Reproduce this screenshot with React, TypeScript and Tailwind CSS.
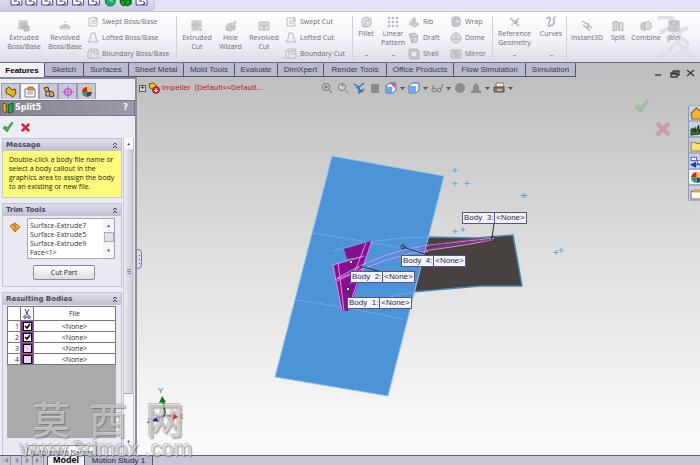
import React from "react";

const UI = "font-['Open_Sans','Noto_Sans',sans-serif]";
const ARIAL = "font-['Liberation_Sans',Arial,sans-serif]";

type IconName =
  | "extrude" | "revolve" | "sweep" | "loft" | "boundary" | "cut" | "hole" | "revcut"
  | "fillet" | "pattern" | "rib" | "draft" | "shell" | "wrap" | "dome" | "mirror"
  | "refgeo" | "curves" | "instant" | "split" | "combine" | "join";

const shapes: Record<IconName, React.ReactNode> = {
  extrude: (<><path d="M1 1h8v8H1z" fill="#e0e0e6" /><path d="M3 3h5v5H3zM6 6h5v5H6z" fill="#c2c2ca" /></>),
  revolve: (<><path d="M6 1v10" strokeDasharray="2 1" /><path d="M1 8c0-3 3-3 5-3s5 0 5 3l-2 1-3-2-3 2z" fill="#cfcfd6" /></>),
  sweep: (<><path d="M2 2h5M2 2v8h8V8M4 5h4l2-3M4 7h6V3" /><path d="M7 1l3 1-1 3" fill="#d0d0d6" /></>),
  loft: (<path d="M4 1h4l1 6 2 3H1l2-3z" fill="#eeeef4" />),
  boundary: (<><path d="M1 3h10v7H1z" fill="#e8e8ee" /><path d="M1 3l2-2h7l1 2M4 3v7M7 3v3h4" /></>),
  cut: (<><path d="M1 1h9v9H1z" fill="#e2e2e8" /><path d="M3 3h5v5H3zM1 5h9M5 1v9M9 9l2 2" /></>),
  hole: (<><path d="M1 6l4-3 5 2v4l-4 2-5-1z" fill="#c8c8ce" /><path d="M6 6l4-5 1 2-4 4z" fill="#e9e9ee" /></>),
  revcut: (<><path d="M1 2h10v8H1z" fill="#dedee4" /><path d="M3 4c1 4 5 4 6 0M6 2v8" /></>),
  fillet: (<><path d="M2 10V5c0-3 2-4 5-4l4 2v6l-3 2H4z" fill="#dedee4" /><path d="M5 11V7c0-2 2-3 5-3" /></>),
  pattern: (<g fill="#c3c3cb"><path d="M1 1h2v2H1zM5 1h2v2H5zM9 1h2v2H9zM1 5h2v2H1zM5 5h2v2H5zM9 5h2v2H9zM1 9h2v2H1zM5 9h2v2H5zM9 9h2v2H9z" strokeWidth=".4" /></g>),
  rib: (<><path d="M1 8l4-2V2h2v4l4 2-4 3z" fill="#c9c9d0" /><path d="M1 6l4-2" /></>),
  draft: (<><path d="M1 2l6-1 3 3-1 6-5 1z" fill="#cfcfd6" /><path d="M1 2l4 3 5-1M5 5L4 11" /></>),
  shell: (<><path d="M1 1h8l2 2v8H3l-2-2z" fill="#c6c6cd" /><path d="M3 3h6v6H3z" fill="#e6e6ec" /></>),
  wrap: (<><path d="M2 2c3-2 6-1 8 0v7c-3 2-6 2-8 0z" fill="#c9c9d0" /><path d="M5 4h5v3H5z" fill="#ececf1" /></>),
  dome: (<><circle cx="6" cy="6" r="5" fill="#dcdce2" /><path d="M1 6c3 2 7 2 10 0M6 1v6" /></>),
  mirror: (<><path d="M1 2h4v8H1zM7 2h4v8H7z" fill="#cfcfd6" /><path d="M6 1v10M3 4l6 4" /></>),
  refgeo: (<><path d="M1 2l9 8M10 2L4 8" strokeWidth="1.5" /><circle cx="7" cy="6" r="1.5" fill="#c0c0c8" /><path d="M2 9h2" /></>),
  curves: (<path d="M1 3c3-3 5-2 4 1S2 11 5 10s5-3 4-5 0-4 2-4" strokeWidth="1.6" />),
  instant: (<><path d="M1 1l5 3 5 4M2 5l3 2 4 4M7 3v3M4 7h4" strokeWidth="1.3" /></>),
  split: (<><path d="M1 2l4-1v9l-4 1z" fill="#d3d3da" /><path d="M7 2l4 1v8l-4-1zM5 1l2 3v7" fill="#e2e2e8" /></>),
  combine: (<><path d="M1 4l3-2 3 2v5L4 11 1 9z" fill="#cbcbd2" /><path d="M5 3l3-2 3 2v5L8 10 5 8z" fill="#dcdce2" /></>),
  join: (<><path d="M1 1h10v10H1z" fill="#cfcfd6" /><path d="M3 1v4h6V1M3 8h6" /></>),
};

function RibbonIcon({ name }: { name: IconName }) {
  return (
    <svg viewBox="0 0 12 12" className="size-3 shrink-0" fill="none" stroke="#b3b3bc" strokeWidth="0.9" aria-hidden="true">
      {shapes[name]}
    </svg>
  );
}

function BigTool({ icon, lines, w, drop, pt = "pt-2" }: { icon: IconName; lines: string[]; w: string; drop?: boolean; pt?: string }) {
  return (
    <button type="button" className={`relative flex shrink-0 flex-col items-center ${pt} ${w}`}>
      <RibbonIcon name={icon} />
      <span className="mt-px flex flex-col items-center leading-[9px] whitespace-nowrap">
        {lines.map((l) => <span key={l}>{l}</span>)}
      </span>
      {drop && <span className="absolute bottom-1.5 h-px w-[3px] bg-[#9a9aa4]" />}
    </button>
  );
}

function ToolList({ items, w }: { items: [IconName, string][]; w: string }) {
  return (
    <div className={`flex shrink-0 flex-col pt-0.5 pl-px ${w}`}>
      {items.map(([icon, label]) => (
        <button key={label} type="button" className="flex h-4 items-center gap-[3px] whitespace-nowrap">
          <RibbonIcon name={icon} />
          {label}
        </button>
      ))}
    </div>
  );
}

const Sep = () => <span className="my-1 w-px shrink-0 bg-[#d0d0da]" />;

const tabs: [string, string][] = [
  ["Features", "w-[45px]"], ["Sketch", "w-[39px]"], ["Surfaces", "w-[45px]"], ["Sheet Metal", "w-[55px]"],
  ["Mold Tools", "w-[51px]"], ["Evaluate", "w-[43px]"], ["DimXpert", "w-[46px]"], ["Render Tools", "w-[63px]"],
  ["Office Products", "w-[67px]"], ["Flow Simulation", "w-[72px]"], ["Simulation", "w-[50px]"],
];

function QuickBar() {
  return (
    <div className="h-3 shrink-0 border-b border-[#c4c4d2] bg-[#e4e4f6]">
      <div className="h-[11px] w-[155px] rounded-br-sm border-r border-[#c8c8dc] bg-linear-to-b from-[#dcdcf0] to-[#c9c9de] pl-[10px]">
        <svg viewBox="10 0 145 8" className="h-2 w-[144px]" aria-hidden="true">
          {[17, 32, 48, 63, 79, 95, 143].map((x) => (
            <g key={x}>
              <path d={`M${x - 6} 0v5h11v-5`} fill="#f7f7ff" stroke="#4545a0" />
              <path d={`M${x} 5l3-2-2-2M${x - 3} 1h3`} stroke="#22222c" fill="none" />
            </g>
          ))}
          <circle cx="111" cy="1" r="5" fill="#18b06a" stroke="#0b6b3a" />
          <path d="M110 0l4 2" stroke="#8df0c0" />
          <path d="M121 0h11v4l-4 2-2-1-2 1-3-3z" fill="#10a020" stroke="#0a5010" />
          <path d="M126 0v5" stroke="#052" />
        </svg>
      </div>
    </div>
  );
}

function Ribbon() {
  return (
    <div className={`relative flex h-[50px] shrink-0 overflow-hidden bg-linear-to-b from-white via-[#f4f4fa] to-[#dddde9] pl-1 text-[7px] text-[#6c6c76] ${UI}`}>
      <svg viewBox="0 0 50 46" className="absolute top-1 right-0 h-[46px] w-[50px]" fill="none" stroke="#dedee9" strokeWidth="4" aria-hidden="true">
        <path d="M8 2c14-3 20 3 14 8L10 17M22 10c6 5 2 10-6 13M4 45c12-6 20-14 20-18M26 24l16 18M38 12c-10 2-12 8-4 12s2 12-12 15" />
      </svg>
      <BigTool icon="extrude" lines={["Extruded", "Boss/Base"]} w="w-10" />
      <BigTool icon="revolve" lines={["Revolved", "Boss/Base"]} w="w-[42px]" />
      <ToolList w="w-[90px]" items={[["sweep", "Swept Boss/Base"], ["loft", "Lofted Boss/Base"], ["boundary", "Boundary Boss/Base"]]} />
      <Sep />
      <BigTool icon="cut" lines={["Extruded", "Cut"]} w="w-10" />
      <BigTool icon="hole" lines={["Hole", "Wizard"]} w="w-[27px]" />
      <BigTool icon="revcut" lines={["Revolved", "Cut"]} w="w-10" />
      <ToolList w="w-[68px]" items={[["sweep", "Swept Cut"], ["loft", "Lofted Cut"], ["boundary", "Boundary Cut"]]} />
      <Sep />
      <BigTool icon="fillet" lines={["Fillet"]} w="w-[26px]" drop pt="pt-1" />
      <BigTool icon="pattern" lines={["Linear", "Pattern"]} w="w-[28px]" drop pt="pt-1" />
      <ToolList w="w-[42px]" items={[["rib", "Rib"], ["draft", "Draft"], ["shell", "Shell"]]} />
      <ToolList w="w-[43px]" items={[["wrap", "Wrap"], ["dome", "Dome"], ["mirror", "Mirror"]]} />
      <Sep />
      <BigTool icon="refgeo" lines={["Reference", "Geometry"]} w="w-[43px]" drop pt="pt-1" />
      <BigTool icon="curves" lines={["Curves"]} w="w-[30px]" drop pt="pt-1" />
      <Sep />
      <BigTool icon="instant" lines={["Instant3D"]} w="w-10" />
      <BigTool icon="split" lines={["Split"]} w="w-[22px]" />
      <BigTool icon="combine" lines={["Combine"]} w="w-[34px]" />
      <BigTool icon="join" lines={["Join"]} w="w-[22px]" />
    </div>
  );
}

function CommandTabs() {
  return (
    <div className={`flex h-[15px] shrink-0 border-t border-[#6a6a84] bg-[#bfbfc1] text-[8px] ${ARIAL}`} role="tablist">
      {tabs.map(([t, w], i) => (
        <button
          key={t}
          type="button"
          role="tab"
          aria-selected={i === 0}
          className={`shrink-0 border-r border-[#55556c] text-center leading-[13px] whitespace-nowrap ${w} ${
            i === 0 ? "bg-[#f0f0f8] font-bold text-black" : "border-b bg-[#b9b9cf] text-[#3a3a4a]"
          }`}
        >
          {t}
        </button>
      ))}
    </div>
  );
}

function Check({ className }: { className: string }) {
  return (
    <svg viewBox="0 0 12 12" className={className} aria-hidden="true">
      <path d="M1 7l2-2 2 2 5-6 1 1-6 9z" fill="#43b043" stroke="#2a7c30" strokeWidth=".6" />
    </svg>
  );
}
function Cross({ className }: { className: string }) {
  return (
    <svg viewBox="0 0 12 12" className={className} aria-hidden="true">
      <path d="M2 2l8 8M10 2l-8 8" stroke="#cf2436" strokeWidth="2.8" />
    </svg>
  );
}

const wheel = (
  <>
    <path d="M6 6V1a5 5 0 0 1 5 5z" fill="#f2c21c" />
    <path d="M6 6V1a5 5 0 0 0-5 5z" fill="#d8232b" />
    <path d="M6 6h5a5 5 0 0 1-5 5z" fill="#3d3d9c" />
    <path d="M6 6H1a5 5 0 0 0 5 5z" fill="#2fa045" />
  </>
);

const managerTabs: [string, React.ReactNode][] = [
  ["Feature tree", <path key="a" d="M1 3l3-2 3 3 3-1 1 4-3 4-3-2-4-2z" fill="#e8b520" stroke="#5c4708" />],
  ["Property manager", <g key="b"><path d="M1 3h10v8H1z" fill="#fff" stroke="#777" /><path d="M4 1h5l1 3H4z" fill="#e29a30" stroke="#7a4d10" strokeWidth=".6" /><path d="M3 6h6M3 8h6" stroke="#888" /></g>],
  ["Configurations", <g key="c"><path d="M1 2l4-1 1 4-3 1zM6 5l4 1 1 4-4 1z" fill="#e3b52b" stroke="#433" /><path d="M3 6v4h3" stroke="#333" fill="none" /></g>],
  ["Dimensions", <g key="d" fill="none" stroke="#c553c5"><circle cx="6" cy="6" r="3.4" strokeWidth="1.4" /><path d="M6 0v12M0 6h12" /></g>],
  ["Appearances", <g key="e">{wheel}</g>],
];

function Section({ title, children, body }: { title: string; children: React.ReactNode; body: string }) {
  return (
    <section className="border border-[#c3c3d4] bg-[#e9e9f3]">
      <h2 className="flex h-3 items-center justify-between bg-linear-to-b from-[#dfdfeb] to-[#bfbfd2] px-[3px] font-['DejaVu_Sans',sans-serif] text-[7px] leading-3 font-bold text-[#4a4a58]">
        {title}
        <button type="button" aria-label={`Collapse ${title}`}>
          <svg viewBox="0 0 6 7" className="h-[7px] w-1.5" fill="none" stroke="#3c3c50"><path d="M1 3l2-2 2 2M1 6l2-2 2 2" /></svg>
        </button>
      </h2>
      <div className={body}>{children}</div>
    </section>
  );
}

function PropertyPanel() {
  return (
    <aside className={`flex w-[137px] shrink-0 flex-col overflow-hidden border-t-2 border-r-2 border-t-[#8a8a9c] border-r-[#8e8e9a] bg-[#ececf5] text-[7px] ${UI}`}>
      <div className="mt-1 flex h-4 shrink-0 pl-px">
        {managerTabs.map(([n, icon], i) => (
          <button key={n} type="button" aria-label={n} className={`flex w-[19px] items-center justify-center border border-b-0 border-[#9c9cb0] ${i === 1 ? "bg-[#f6f6fc]" : "bg-[#c9c9dc]"}`}>
            <svg viewBox="0 0 12 12" className="size-3">{icon}</svg>
          </button>
        ))}
      </div>
      <div className="mt-px flex h-4 shrink-0 items-center gap-px border border-[#77778a] bg-linear-to-r from-[#858594] to-[#9a9aaa] pl-px font-['DejaVu_Sans',sans-serif] text-[8px] font-bold text-white">
        <svg viewBox="0 0 12 12" className="size-3" aria-hidden="true">
          <path d="M1 1l3 1v9l-3-2z" fill="#e2c52a" stroke="#3c3408" strokeWidth=".7" />
          <path d="M6 3l5-2v9l-4 1z" fill="#27a347" stroke="#083a15" strokeWidth=".7" />
          <path d="M4 9l3 2" stroke="#c22" />
        </svg>
        <span className="flex-1">Split5</span>
        <button type="button" aria-label="Help" className="pr-1.5">?</button>
      </div>
      <div className="flex h-[22px] shrink-0 items-center gap-1.5 pl-0.5">
        <button type="button" aria-label="OK"><Check className="size-3" /></button>
        <button type="button" aria-label="Cancel"><Cross className="size-[11px]" /></button>
      </div>
      <div className="flex min-h-0 flex-1">
        <div className="flex min-w-0 flex-1 flex-col gap-[5px] overflow-hidden pl-0.5">
          <Section title="Message" body="h-[46px] bg-[#fdfb7c] px-1.5 pt-1 text-[#26260c]">
            <p className="leading-[9px] whitespace-nowrap">
              Double-click a body file name or<br />select a body callout in the<br />graphics area to assign the body<br />to an existing or new file.
            </p>
          </Section>
          <Section title="Trim Tools" body="px-1.5 pt-0.5 pb-1.5">
            <div className="flex items-start">
              <svg viewBox="0 0 12 12" className="mt-[3px] mr-1.5 size-3 shrink-0" aria-hidden="true"><path d="M1 5l5-3 5 4-5 5z" fill="#f3b34a" stroke="#b86a10" /><path d="M6 2v9M4 3l5 6" stroke="#c6701a" fill="none" /></svg>
              <div className="flex h-[41px] w-[90px] border border-[#a5a5b5] bg-white">
                <ul className="flex-1 pt-0.5 pl-0.5 leading-[9px] text-[#33333f]" aria-label="Trimming surfaces">
                  <li>Surface-Extrude7</li><li>Surface-Extrude5</li><li>Surface-Extrude9</li><li>Face&lt;1&gt;</li>
                </ul>
                <div className="flex w-[11px] flex-col items-center justify-between bg-[#f3f3f8] py-1 text-[4px] leading-[6px] text-[#222]">
                  <span>▲</span><span className="mb-1 h-[10px] w-[10px] border border-[#aaaaba] bg-[#e1e1ea]" /><span>▼</span>
                </div>
              </div>
            </div>
            <button type="button" className="mt-[6px] ml-6 block h-[15px] w-[62px] rounded-xs border border-[#8b8b96] bg-linear-to-b from-white to-[#dcdce2] text-center leading-3 text-[#22222c]">Cut Part</button>
          </Section>
          <Section title="Resulting Bodies" body="h-[152px] px-1 pt-px">
            <div className="h-[132px] w-[109px] bg-[#ababab]">
              <table className="w-full table-fixed border-collapse bg-white text-center text-[#2c2c34]">
                <thead>
                  <tr className="h-[14px]">
                    <th className="w-[13px] border border-[#777] p-0" aria-label="Number" />
                    <th className="w-[13px] border border-[#777] p-0">
                      <svg viewBox="0 0 8 10" className="mx-auto h-[10px] w-2" fill="none" stroke="#3b3b98" aria-label="Cut"><path d="M2 0l3 6M6 0L3 6" /><circle cx="2" cy="8" r="1.3" /><circle cx="6" cy="8" r="1.3" /></svg>
                    </th>
                    <th className="border border-[#777] p-0 leading-[9px] font-normal">File</th>
                  </tr>
                </thead>
                <tbody>
                  {[1, 2, 3, 4].map((n) => (
                    <tr key={n} className="h-[11px]">
                      <td className="border border-[#777] p-0 pr-px text-right leading-[9px]">{n}</td>
                      <td className="border border-[#777] bg-[#8b2a98] p-0">
                        <span className="relative mx-auto block size-[9px]">
                          <input type="checkbox" defaultChecked={n < 3} aria-label={`Body ${n}`} className="peer block size-[9px] appearance-none border border-black bg-[#e8d8ec] checked:bg-white" />
                          <svg viewBox="0 0 9 9" className="pointer-events-none absolute inset-0 hidden size-[9px] peer-checked:block" fill="none" stroke="#000" strokeWidth="1.5"><path d="M2 4l2 2 3-4" /></svg>
                        </span>
                      </td>
                      <td className="border border-[#777] p-0 leading-[9px]">&lt;None&gt;</td>
                    </tr>
                  ))}
                </tbody>
              </table>
            </div>
            <button type="button" className="mt-[7px] ml-5 block h-[14px] w-[70px] rounded-xs border border-[#8b8b96] bg-white text-center leading-[7px] whitespace-nowrap text-[#33333c]">Auto-assign Names</button>
          </Section>
        </div>
        <div className="ml-px flex w-[11px] shrink-0 flex-col items-center border-x border-[#c8c8d4] bg-[#f7f7fb] text-[4px] leading-[11px] text-[#222]">
          <span>▲</span>
          <span className="flex h-[245px] w-full flex-col items-center justify-center gap-px border-b border-[#a5a5b4] bg-linear-to-r from-[#ededf5] to-[#c6c6d4]">
            <i className="h-px w-1 bg-[#888898]" /><i className="h-px w-1 bg-[#888898]" /><i className="h-px w-1 bg-[#888898]" />
          </span>
          <span className="mt-auto mb-2">▼</span>
        </div>
        <span className="w-px" />
      </div>
    </aside>
  );
}

function Callout({ n, pos }: { n: number; pos: string }) {
  return (
    <div className={`absolute flex h-3 border border-[#54548c] bg-[#f4f4ff] text-[8px] leading-[10px] whitespace-pre text-[#2c2c4c] ${ARIAL} ${pos}`}>
      <span className="w-8 border-r border-[#54548c] pl-px">{`Body  ${n}:`}</span>
      <span className="w-[31px] text-center">&lt;None&gt;</span>
    </div>
  );
}

const marks = [[455, 170], [455, 183], [467, 183], [523, 195], [525, 195], [455, 231], [463, 229], [556, 252], [561, 250]];

function Scene() {
  return (
    <svg viewBox="137 77 563 378" className="absolute top-0 left-0 h-[378px] w-[563px]" fill="none" role="img" aria-label="Impeller model">
      <path d="M427 237L477 238L513 235L522 286L480 286L413 292Z" fill="#47423f" stroke="#4586ba" strokeWidth="1.5" />
      <path d="M332 156L444 176L388 396L275 377Z" fill="#4c93d8" stroke="#94c4ef" />
      <g stroke="#6ba9e6">
        <path d="M313 233L428 252M295 300Q330 304 403 319M333 251Q370 238 428 237M380 301Q395 294 414 292" />
      </g>
      <path d="M344 249L371 241L367 256L347 259Z" fill="#86108e" />
      <path d="M333 265L366 256L358 284L348 311H342Z" fill="#86108e" />
      <g stroke="#dc8df0">
        <path d="M333 265L364 256M338 262L344 311M372 241L348 309M366 243L350 284M334 280Q350 275 361 266M333 265L342 311" />
        <path d="M337 278Q385 250 430 245T495 238M337 281Q385 256 430 250T495 239" />
      </g>
      <path d="M420 248Q450 241 480 239M420 251Q455 243 490 240" stroke="#a8389c" strokeDasharray="5 1" />
      <g stroke="#29303e">
        <path d="M403 247L428 255M359 266L382 272M494 223L492 238M348 289L352 298" />
        <circle cx="403" cy="247" r="2" /><circle cx="493" cy="238" r="2" />
      </g>
      <g fill="#fff" stroke="#333"><circle cx="351" cy="262" r="1.6" /><circle cx="348" cy="289" r="1.6" /></g>
      {marks.map(([x, y]) => <path key={`${x}-${y}`} d={`M${x - 2.5} ${y + .5}h5M${x} ${y - 2}v5`} stroke="#70a5d3" />)}
      <g strokeWidth="2">
        <path d="M165 414L163 400" stroke="#17752a" /><path d="M159 403L162 396L166 402Z" fill="#17752a" />
        <path d="M165 415L174 417" stroke="#c22020" /><path d="M172 413L179 417L172 420Z" fill="#d22" />
        <path d="M165 415L157 419" stroke="#20208f" /><path d="M158 415L152 421L160 422Z" fill="#20208f" />
      </g>
    </svg>
  );
}

const viewIcons: [string, string, React.ReactNode, boolean][] = [
  ["Zoom to fit", "w-4", <g key="1" fill="none" stroke="#666"><circle cx="5" cy="5" r="3.5" fill="#d4d4da" /><path d="M8 8l3 3M3 5h4M5 3v4" /></g>, false],
  ["Zoom to area", "w-4", <g key="2" fill="none" stroke="#777"><circle cx="5" cy="5" r="3.5" fill="#d4d4da" /><path d="M8 8l3 3M4 3h2v2" /></g>, false],
  ["Previous view", "w-4", <g key="3" fill="none" stroke="#2f70b4" strokeWidth="1.4"><path d="M1 2l5 3 5-4M3 5l7 5M6 5v6l5-4" /></g>, false],
  ["Section view", "w-4", <path key="4" d="M2 2h8v9H2z" fill="#8b8b8d" />, false],
  ["View orientation", "w-[23px]", <g key="5"><path d="M1 4l4-3h6v7l-3 3H1z" fill="#eef" stroke="#4866a8" /><path d="M1 5h6v6H1z" fill="#6fa5e6" /><path d="M5 1l5 1v4z" fill="#c84d66" /></g>, true],
  ["Display style", "w-[23px]", <g key="6"><path d="M1 4l3-3h7v7l-3 3H1z" fill="#eaf2ff" stroke="#4a6cae" /><path d="M1 4h7v7H1z" fill="#76a9ea" /></g>, true],
  ["Hide or show items", "w-[23px]", <g key="7" fill="none" stroke="#777"><circle cx="3" cy="8" r="2" /><circle cx="8" cy="8" r="2" /><path d="M1 7l2-4M10 7l2-5" /></g>, true],
  ["Edit appearance", "w-4", <circle key="8" cx="6" cy="6" r="5" fill="#8c8c8e" />, false],
  ["Apply scene", "w-[23px]", <path key="9" d="M1 11V9l2-1V4l3-3 3 3v4l2 1v2z" fill="#8c8c8e" />, true],
  ["View settings", "w-[23px]", <g key="10"><path d="M3 1h7l1 4H3z" fill="#f3ece4" stroke="#876" /><path d="M1 5h10v5H1z" fill="#94755f" stroke="#554" /><path d="M4 8h5" stroke="#eee" /></g>, true],
];

const sideIcons: [string, React.ReactNode][] = [
  ["Resources", <path key="1" d="M1 6l5-5 6 5v5H2z" fill="#eeb434" stroke="#96641a" />],
  ["Design library", <path key="2" d="M1 11V6l2-1v4l2-5v5l3-7v7l3-8v9z" fill="#3f7d36" stroke="#223a1c" />],
  ["File explorer", <path key="3" d="M1 3h4l1 1h6v7H1z" fill="#f7df80" stroke="#a3842a" />],
  ["View palette", <g key="4"><path d="M1 2h5v3H1zM7 5h5v3H7z" fill="#fff" stroke="#5570b0" /><path d="M1 9l4-2v4zM5 9h5" fill="#23c" stroke="#23c" /></g>],
  ["Appearances", <g key="5">{wheel}</g>],
  ["Custom properties", <g key="6"><path d="M1 4h11v7H1z" fill="#fbf8ea" stroke="#777" /><path d="M3 2h7l1 3H3z" fill="#d8a947" /></g>],
];

function Viewport() {
  return (
    <main className="relative min-w-0 flex-1 bg-linear-to-b from-[#bfbfc0] via-[#e0e0e0] to-[#fcfcfc]">
      <Scene />
      <Callout n={3} pos="left-[325px] top-[135px]" />
      <Callout n={4} pos="left-[264px] top-[178px]" />
      <Callout n={2} pos="left-[213px] top-[194px]" />
      <Callout n={1} pos="left-[210px] top-[220px]" />
      <div className={`absolute top-[308px] left-[21px] text-[8px] ${ARIAL}`} aria-hidden="true">
        <span className="absolute top-0 left-0 text-[#2a8438]">Y</span>
        <span className="absolute top-[26px] left-5 text-[#d22]">X</span>
        <span className="absolute top-[30px] left-[-11px] text-[#22a]">Z</span>
      </div>
      <div className="relative flex h-[22px] items-center">
        <div className={`flex w-[184px] items-center gap-0.5 pl-0.5 text-[8px] text-[#c0202c] font-['Roboto','Noto_Sans',sans-serif]`}>
          <button type="button" aria-label="Expand tree" className="size-[7px] border border-[#555] bg-[#ddd] text-center text-[7px] leading-[5px] text-black">+</button>
          <svg viewBox="0 0 12 12" className="size-3" aria-hidden="true"><path d="M1 2l4-1 4 3-3 4-4-2z" fill="#efc332" stroke="#6c5210" /><circle cx="8" cy="8" r="3.5" fill="#d6222c" stroke="#7a1014" strokeWidth=".6" /><path d="M8 6v3M6 8l2 2 2-2" stroke="#fff" fill="none" /></svg>
          <span className="whitespace-pre">{"impeller  (Default<<Default..."}</span>
        </div>
        {viewIcons.map(([n, w, icon, drop]) => (
          <button key={n} type="button" aria-label={n} className={`flex shrink-0 items-center gap-px ${w}`}>
            <svg viewBox="0 0 12 12" className="size-3">{icon}</svg>
            {drop && <svg viewBox="0 0 5 3" className="ml-0.5 h-[3px] w-[5px]"><path d="M0 0h5L2.5 3z" fill="#555" /></svg>}
          </button>
        ))}
      </div>
      <div className="absolute top-[-9px] right-1 flex items-center gap-[6px]">
        {[["Minimize", "M1 7h6"], ["Restore", "M3 3h6v4H7M3 3v2M1 5h6v4H1zM1 6h6"], ["Close", "M1 2l7 6M8 2L1 8"]].map(([n, d]) => (
          <button key={n} type="button" aria-label={n}>
            <svg viewBox="0 0 10 10" className="size-[10px]" fill="none" stroke="#3a3a3e" strokeWidth="1.4"><path d={d} /></svg>
          </button>
        ))}
      </div>
      <button type="button" aria-label="Accept" className="absolute top-[21px] right-[49px] opacity-25"><Check className="h-4 w-[18px]" /></button>
      <button type="button" aria-label="Discard" className="absolute top-[43px] right-[28px] opacity-25"><Cross className="size-[18px]" /></button>
      <div className="absolute top-[28px] right-0 flex w-3 flex-col overflow-hidden rounded-l-xs border-l border-[#8a97b8]">
        {sideIcons.map(([n, icon], i) => (
          <button key={n} type="button" aria-label={n} className={`flex h-[16px] items-center border-y border-[#a2acc6] ${i === 4 ? "bg-white" : "bg-[#c8d0e4]"}`}>
            <svg viewBox="0 0 12 12" className="ml-px size-[13px] shrink-0">{icon}</svg>
          </button>
        ))}
      </div>
      <button type="button" aria-label="Collapse panel" className="absolute top-[172px] left-[-1px] flex h-[20px] w-1.5 flex-col items-center justify-center gap-[3px] rounded-r-sm border border-[#7c7c9c] bg-[#dcdcec]">
        <i className="size-px bg-[#446]" /><i className="size-px bg-[#446]" /><i className="size-px bg-[#446]" />
      </button>
    </main>
  );
}

function BottomTabs() {
  return (
    <footer className={`flex h-[10px] shrink-0 overflow-hidden border-t border-[#60607c] bg-[#c7c7d6] text-[8px] leading-[9px] ${ARIAL}`}>
      <div className="flex w-[47px]">
        {["M2 2v5M7 2L4 4.5L7 7z", "M6 2L3 4.5L6 7z", "M3 2l3 2.500L3 7z", "M2 2l3 2.500L2 7zM7 2v5"].map((d) => (
          <button key={d} type="button" aria-label="Scroll tabs" className="flex h-[10px] w-[11px] justify-center border-r border-[#9090a4]">
            <svg viewBox="0 0 9 9" className="size-[9px]" fill="#8c8ca2" stroke="#8c8ca2" strokeWidth=".5"><path d={d} /></svg>
          </button>
        ))}
      </div>
      <button type="button" className="w-[38px] border-x border-[#55556c] bg-[#f0f0f8] text-center text-[9px] font-bold text-black">Model</button>
      <button type="button" className="w-[68px] border-r border-[#55556c] bg-[#b9b9cf] text-center whitespace-nowrap text-[#20202c]">Motion Study 1</button>
    </footer>
  );
}

function Watermark() {
  return (
    <div className="pointer-events-none absolute bottom-1 left-5 flex w-[176px] flex-col text-white/50 [text-shadow:1px_1px_1px_#55555590,-1px_-1px_0_#77777760]">
      <div className="flex justify-between px-3 font-['Noto_Sans_CJK_SC',sans-serif] text-[38px] leading-[38px] font-medium">
        <span>莫</span><span>西</span><span>网</span>
      </div>
      <div className={`text-[22px] leading-6 whitespace-pre ${ARIAL}`}>www.3dmox .com</div>
    </div>
  );
}

export default function App() {
  return (
    <div className="relative flex h-screen w-full flex-col overflow-hidden bg-[#e4e4f6]">
      <QuickBar />
      <Ribbon />
      <CommandTabs />
      <div className="flex min-h-0 flex-1">
        <PropertyPanel />
        <Viewport />
      </div>
      <BottomTabs />
      <Watermark />
    </div>
  );
}
